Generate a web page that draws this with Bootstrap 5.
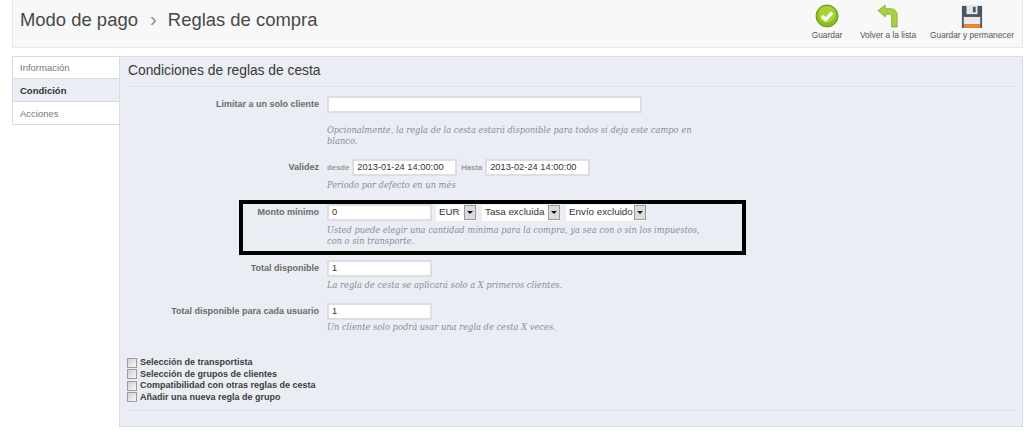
<!DOCTYPE html>
<html lang="es"><head><meta charset="utf-8"><title>Reglas de compra</title>
<link href="https://cdn.jsdelivr.net/npm/bootstrap@5.3.0/dist/css/bootstrap.min.css" rel="stylesheet">
<style>
html,body{height:441px;overflow:hidden;background:#fff;font-family:"Liberation Sans",Arial,sans-serif;font-size:9px;color:#585a69}
.pg{padding-left:12px;padding-right:1px}
.topbar{height:48px;background:#f8f8f8;border:1px solid #e8e8e8;border-top:0;padding:0 0 0 7px;margin-bottom:8px}
.crumb{font-size:18.45px;color:#484848;line-height:40px}
.crumb .sep{color:#8a8a8a;font-size:20px;margin:0 6px 0 7px;line-height:1}
.tbtn{color:#555;font-size:8.35px;line-height:10px;text-align:center;padding-top:3px;white-space:nowrap}
.tbtn svg{display:block;margin:0 auto 1px}
.t1{width:36px;margin-right:11px}.t2{width:64px;margin-right:10px}.t3{width:84px;margin-right:8px}
.sidetabs{width:107px;flex:none}
.stab{height:23px;line-height:22px;padding-left:7px;background:#fff;border:1px solid #d8dbe6;border-top:0;border-right:0;color:#777;font-size:9.5px}
.stab:first-child{border-top:1px solid #d8dbe6}
.stab+.stab{line-height:23px}
.stab.on{background:#ebedf4;color:#333;font-weight:700}
.panel{flex:1;height:371px;background:#ebedf4;border:1px solid #d8dbe6;padding:0 0 0 8px}
.ptitle{font-size:13.8px;color:#383838;line-height:28px;height:30px;border-bottom:1px solid #dcdfe8;margin-right:6px;margin-bottom:9px}
.frow{display:flex}
.lab{width:199px;flex:none;text-align:right;font-weight:700;font-size:9px;color:#6a6a6a;padding-right:8px;padding-top:3px;line-height:11px}
.fld{flex:1}
.inp{display:block;background:#fff;border:2px solid #dcdee4;height:17px;font-size:9.3px;line-height:13px;color:#333;padding:0 3px;white-space:nowrap;flex:none}
.w1{width:315px}.w2{width:105px}.w3{width:105px}
.help{font-family:"DejaVu Serif","Liberation Serif",serif;font-style:italic;font-size:8.3px;line-height:11px;color:#8a8c96;margin:0;width:375px}
.hm1{margin-top:12px;margin-bottom:12px}
.hm2{margin-top:4px;margin-bottom:13px}
.hm3{margin-top:4px;margin-bottom:13px}
.hm4{margin-top:3px;margin-bottom:12px}
.hm5{margin-top:2px;margin-bottom:24px}
.mini{font-size:7.7px;font-weight:700;color:#9a9a9a;margin:0 3px 0 0;line-height:17px}
.gapr{margin-right:4px}
.sel{display:inline-flex;align-items:center;justify-content:space-between;height:16px;background:#fff;font-size:9.8px;color:#333;padding-left:3px;border:0;flex:none}
.s1{width:40px;margin-right:6px}.s2{width:78px;margin-right:6px}.s3{width:80px}
.arr{width:12px;height:15px;background:#dcdcdc;border:1px solid #9a9a9a;position:relative;flex:none}
.arr::after{content:"";position:absolute;left:2px;top:5px;border:3px solid transparent;border-top:3px solid #111;border-bottom:0}
.hl{position:absolute;left:239px;top:200px;width:507px;height:55px;border:4px solid #000;pointer-events:none}
.chk{display:flex;align-items:center;height:11.5px;font-weight:700;font-size:9px;color:#3c3c3c}
.box{width:10px;height:10px;background:linear-gradient(135deg,#d0d0d0,#f7f7f7);border:1px solid #9c9c9c;margin-right:3px;margin-left:-1px;flex:none}
.foot{border-top:1px solid #dcdfe8;margin-right:6px;margin-top:7px}
</style></head><body>
<div class="pg">
<div class="topbar d-flex justify-content-between">
<div class="crumb">Modo de pago <span class="sep">›</span> Reglas de compra</div>
<div class="d-flex align-items-start">
<div class="tbtn t1"><svg width="24" height="26" viewBox="0 0 24 26"><circle cx="12" cy="13" r="11" fill="#8dbb1c" stroke="#6d9a10"/><circle cx="12" cy="11.5" r="8.5" fill="#a9d13a"/><path d="M7 13l3.6 3.6 6.6-7" fill="none" stroke="#fff" stroke-width="3.2"/></svg>Guardar</div>
<div class="tbtn t2"><svg width="22" height="26" viewBox="0 0 24 26"><path d="M1 7l8-6v4h6c4 0 7 3 7 7v13h-6V13c0-1-1-2-2-2H9v3z" fill="#a8cf45" stroke="#7ea322" stroke-width=".8"/></svg>Volver a la lista</div>
<div class="tbtn t3"><svg width="22" height="26" viewBox="0 0 24 26"><path d="M1 2h22v24H1z" fill="#4a5560"/><rect x="6" y="2" width="12" height="9" fill="#dce8ee"/><rect x="13" y="3" width="3" height="6" fill="#4a5560"/><rect x="3" y="14" width="18" height="8" fill="#e8e8e8"/><rect x="3" y="22" width="18" height="4" fill="#ef8a2c"/></svg>Guardar y permanecer</div>
</div>
</div>
<div class="d-flex">
<div class="sidetabs"><div class="stab">Información</div><div class="stab on">Condición</div><div class="stab">Acciones</div></div>
<div class="panel">
<div class="ptitle">Condiciones de reglas de cesta</div>
<div class="frow"><div class="lab">Limitar a un solo cliente</div><div class="fld"><span class="inp w1"></span><p class="help hm1">Opcionalmente, la regla de la cesta estará disponible para todos si deja este campo en blanco.</p></div></div>
<div class="frow"><div class="lab">Validez</div><div class="fld"><div class="d-flex align-items-center"><span class="mini">desde</span><span class="inp w2 gapr">2013-01-24 14:00:00</span><span class="mini">Hasta</span><span class="inp w2">2013-02-24 14:00:00</span></div><p class="help hm2">Periodo por defecto en un més</p></div></div>
<div class="frow"><div class="lab">Monto mínimo</div><div class="fld"><div class="d-flex align-items-center"><span class="inp w3 gapr">0</span><span class="sel s1">EUR<i class="arr"></i></span><span class="sel s2">Tasa excluida<i class="arr"></i></span><span class="sel s3">Envío excluido<i class="arr"></i></span></div><p class="help hm3">Usted puede elegir una cantidad mínima para la compra, ya sea con o sin los impuestos, con o sin transporte.</p></div></div>
<div class="frow"><div class="lab">Total disponible</div><div class="fld"><span class="inp w3">1</span><p class="help hm4">La regla de cesta se aplicará solo a X primeros clientes.</p></div></div>
<div class="frow"><div class="lab">Total disponible para cada usuario</div><div class="fld"><span class="inp w3">1</span><p class="help hm5">Un cliente solo podrá usar una regla de cesta X veces.</p></div></div>
<div class="chk"><i class="box"></i>Selección de transportista</div>
<div class="chk"><i class="box"></i>Selección de grupos de clientes</div>
<div class="chk"><i class="box"></i>Compatibilidad con otras reglas de cesta</div>
<div class="chk"><i class="box"></i>Añadir una nueva regla de grupo</div>
<div class="foot"></div>
</div></div></div>
<div class="hl"></div>
<script src="https://cdn.jsdelivr.net/npm/bootstrap@5.3.0/dist/js/bootstrap.bundle.min.js"></script>
</body></html>
